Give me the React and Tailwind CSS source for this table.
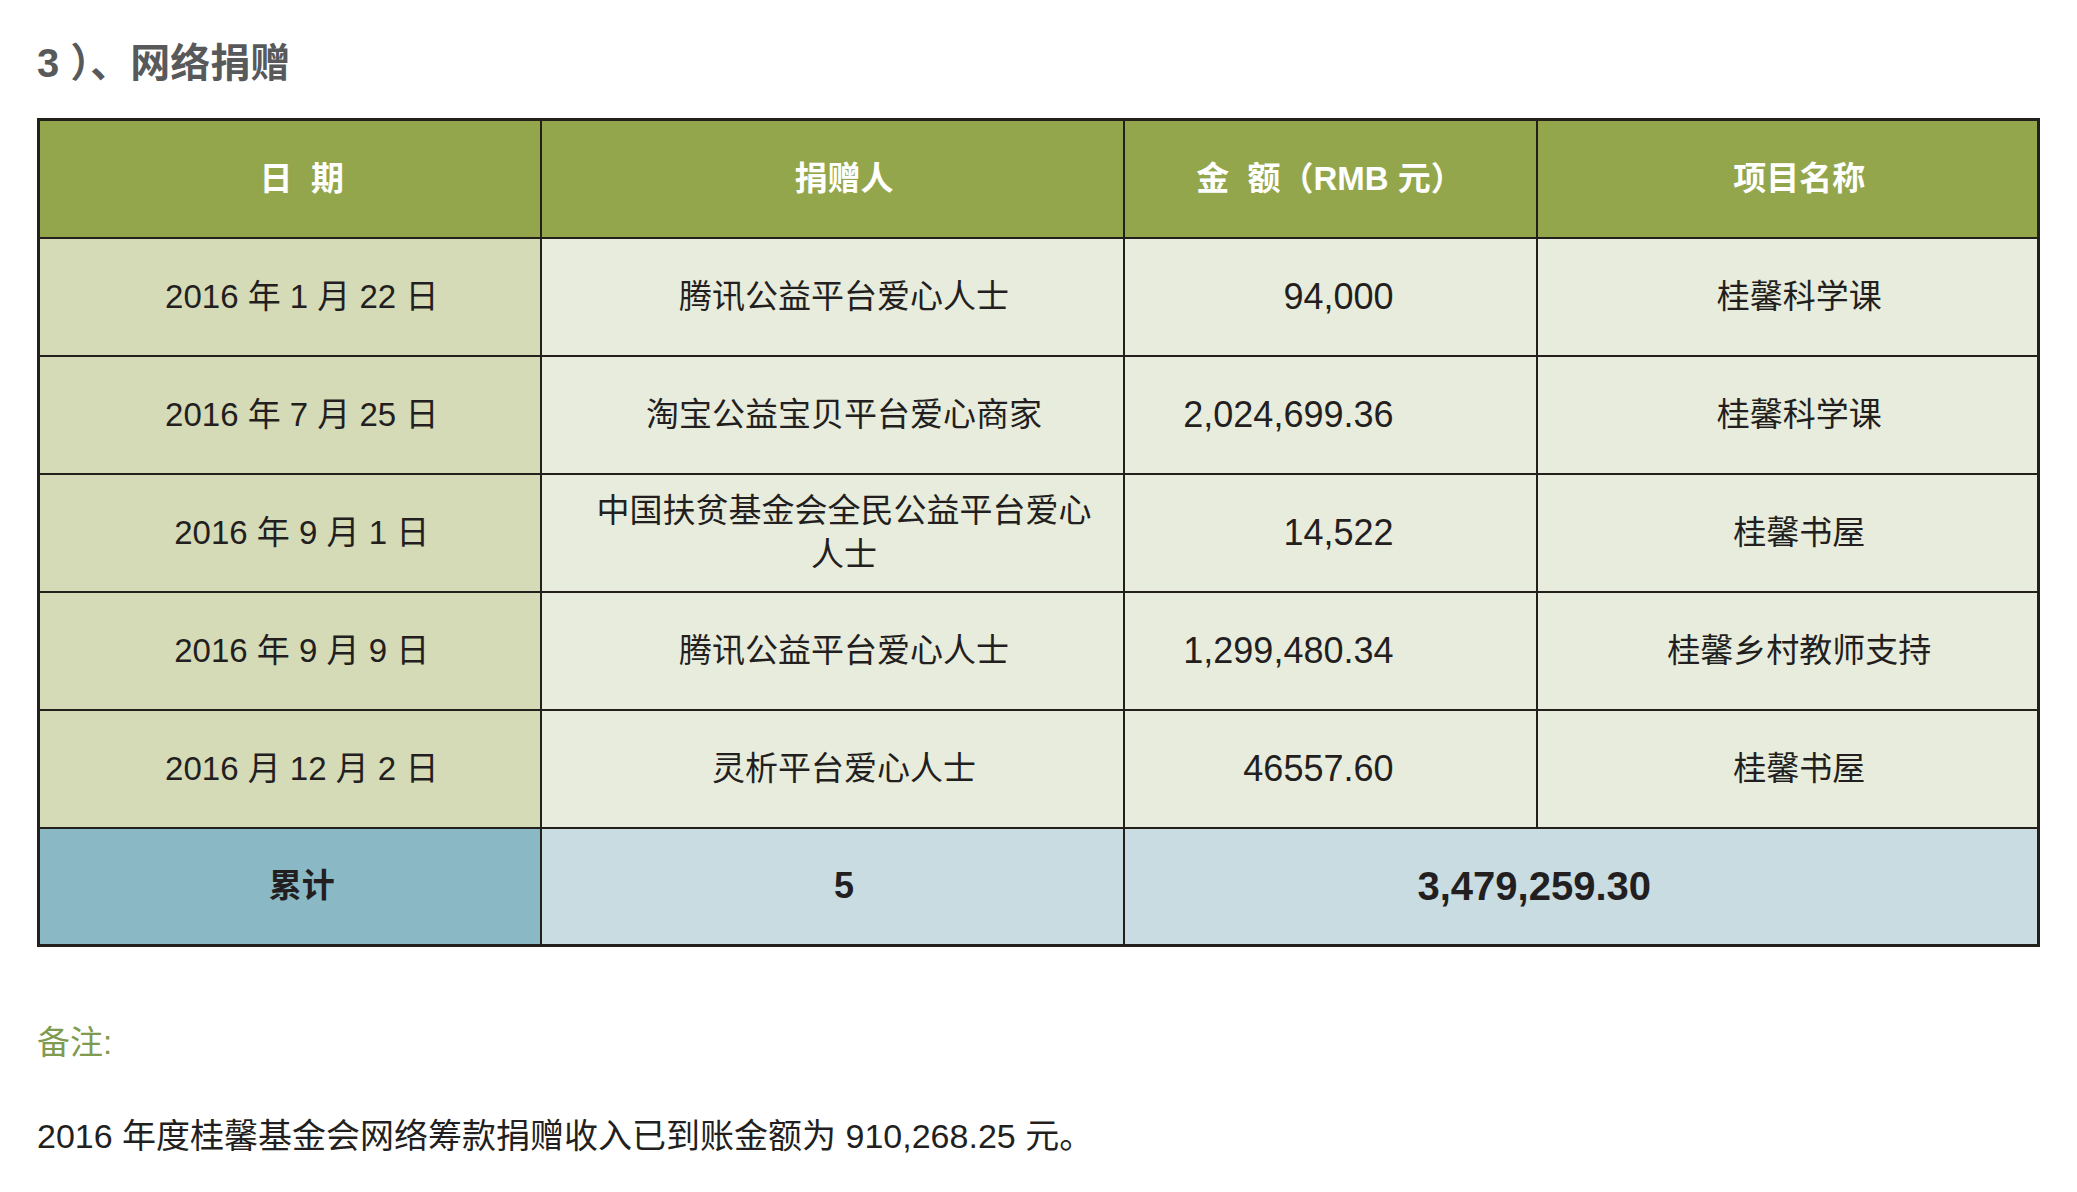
import React from 'react';

const rows = [
  { date: '2016 年 1 月 22 日', donor: '腾讯公益平台爱心人士', amount: '94,000', project: '桂馨科学课' },
  { date: '2016 年 7 月 25 日', donor: '淘宝公益宝贝平台爱心商家', amount: '2,024,699.36', project: '桂馨科学课' },
  { date: '2016 年 9 月 1 日', donor: '中国扶贫基金会全民公益平台爱心人士', amount: '14,522', project: '桂馨书屋' },
  { date: '2016 年 9 月 9 日', donor: '腾讯公益平台爱心人士', amount: '1,299,480.34', project: '桂馨乡村教师支持' },
  { date: '2016 月 12 月 2 日', donor: '灵析平台爱心人士', amount: '46557.60', project: '桂馨书屋' },
];

const font = { fontFamily: '"Liberation Sans", "Noto Sans CJK SC", sans-serif' };

export default function App() {
  return (
    <div className="min-h-screen w-full bg-white pl-[37px] pt-[39px] text-[#231f20]" style={font}>
      <h2 className="text-[40px] leading-[48px] font-bold text-[#58595b]">3 ）、网络捐赠</h2>

      <table className="mt-[31px] w-[2000px] table-fixed border-collapse border-[3px] border-[#231f1a] text-[33px] leading-[44px]">
        <colgroup>
          <col className="w-[502px]" />
          <col className="w-[583px]" />
          <col className="w-[413px]" />
          <col className="w-[502px]" />
        </colgroup>
        <thead>
          <tr className="bg-[#94a64c] text-white font-bold">
            <th className="h-[118px] border-2 border-[#231f1a] pl-[24px] text-center">日&nbsp;&nbsp;期</th>
            <th className="h-[118px] border-2 border-[#231f1a] pl-[52px] pr-[28px] text-center">捐赠人</th>
            <th className="h-[118px] border-2 border-[#231f1a] text-center">金&nbsp;&nbsp;额（RMB 元）</th>
            <th className="h-[118px] border-2 border-[#231f1a] pl-[24px] text-center">项目名称</th>
          </tr>
        </thead>
        <tbody>
          {rows.map((r, i) => (
            <tr key={i} className="bg-[#e8ecdc]">
              <td className="h-[118px] border-2 border-[#231f1a] bg-[#d5dab7] pl-[24px] text-center">{r.date}</td>
              <td className="h-[118px] border-2 border-[#231f1a] pl-[52px] pr-[28px] text-center">{r.donor}</td>
              <td className="h-[118px] border-2 border-[#231f1a] pr-[142px] text-right text-[36px]">{r.amount}</td>
              <td className="h-[118px] border-2 border-[#231f1a] pl-[24px] text-center">{r.project}</td>
            </tr>
          ))}
          <tr className="bg-[#c8dce1] font-bold">
            <td className="h-[118px] border-2 border-[#231f1a] bg-[#8ab9c5] pl-[24px] text-center">累计</td>
            <td className="h-[118px] border-2 border-[#231f1a] pl-[52px] pr-[28px] text-center text-[36px]">5</td>
            <td colSpan={2} className="h-[118px] border-2 border-[#231f1a] pr-[93px] text-center text-[40px]">3,479,259.30</td>
          </tr>
        </tbody>
      </table>

      <p className="mt-[76px] text-[33px] leading-[40px] text-[#7f9b4f]">备注:</p>
      <p className="mt-[53px] text-[34px] leading-[40px]">
        2016 年度桂馨基金会网络筹款捐赠收入已到账金额为 910,268.25 元。
      </p>
    </div>
  );
}
